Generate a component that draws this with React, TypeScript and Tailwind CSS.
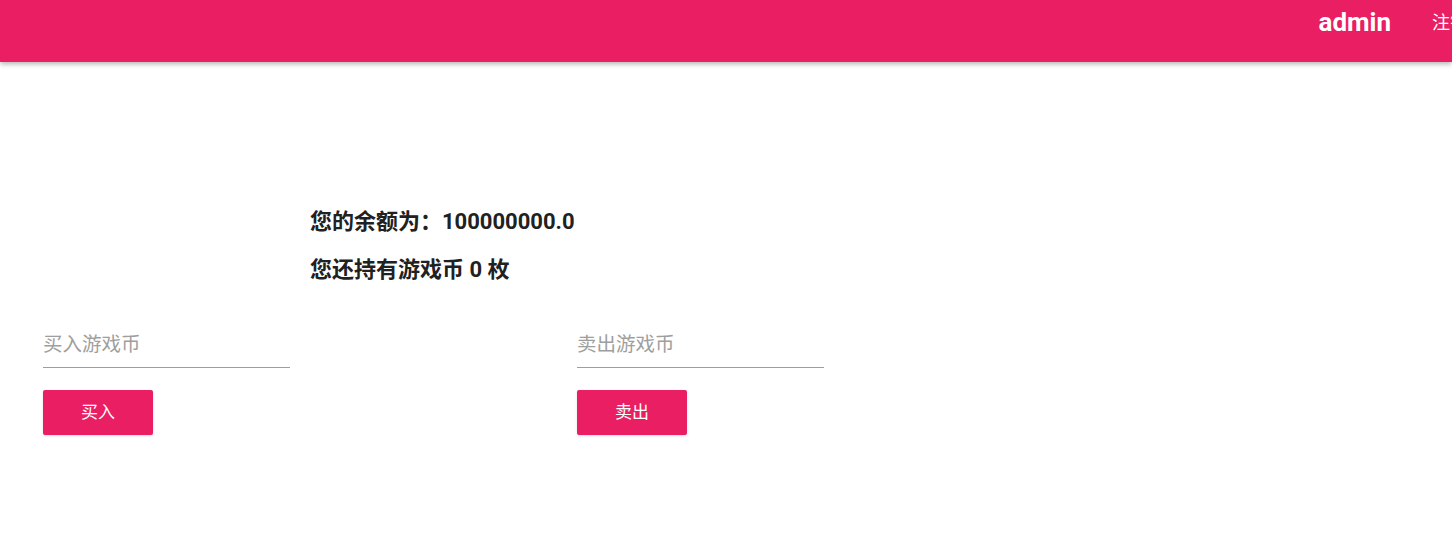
import React from "react";

const font = { fontFamily: 'Roboto, "Noto Sans CJK SC", sans-serif' };

function TradeBox({ placeholder, label }: { placeholder: string; label: string }) {
  return (
    <div className="w-[534px] flex flex-col">
      <input
        placeholder={placeholder}
        className="w-[247px] h-[46px] border-b border-[#9e9e9e] text-[19.5px] outline-none placeholder:text-[#9e9e9e] bg-transparent"
        style={font}
      />
      <button
        className="mt-[22px] w-[110px] h-[45px] rounded-[2px] bg-[#e91e63] text-white text-[17px] shadow-sm"
        style={font}
      >
        {label}
      </button>
    </div>
  );
}

export default function App() {
  return (
    <div className="w-[1452px] h-[554px] overflow-hidden bg-white" style={font}>
      <header className="h-[62px] bg-[#e91e63] shadow-[0_2px_5px_rgba(0,0,0,0.3)] flex items-center justify-end relative z-10">
        <div className="flex items-center mr-[-16px] gap-[41px] text-white mt-[-18px]">
          <span className="text-[26px] font-bold">admin</span>
          <span className="text-[18px] whitespace-nowrap">注销</span>
        </div>
      </header>
      <main className="pt-[145px]">
        <div className="ml-[310px] text-[22px] font-bold text-[#212121] flex flex-col gap-[18px]">
          <div className="leading-[30px]">您的余额为：100000000.0</div>
          <div className="leading-[30px]">您还持有游戏币 0 枚</div>
        </div>
        <div className="flex pl-[43px] mt-[37px]">
          <TradeBox placeholder="买入游戏币" label="买入" />
          <TradeBox placeholder="卖出游戏币" label="卖出" />
        </div>
      </main>
    </div>
  );
}
